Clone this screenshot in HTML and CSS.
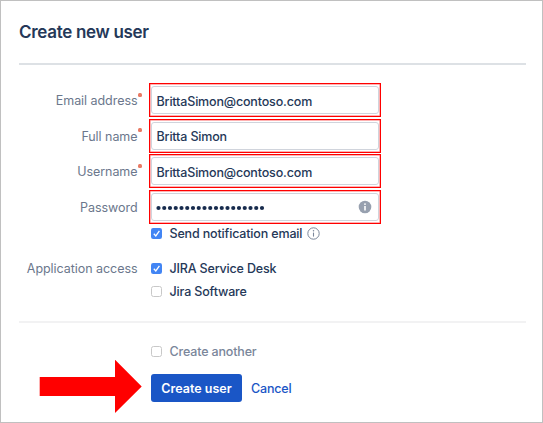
FILE: index.html
```html
<!DOCTYPE html>
<html lang="en">
<head>
<meta charset="utf-8">
<title>Create new user</title>
<link rel="stylesheet" href="styles.css">
</head>
<body>
<main class="dialog">
  <h1 class="title"><span>Create new user</span></h1>
  <form class="form">
    <div class="row"><label class="label required"><span>Email address</span></label><div class="field"><div class="input"><span>BrittaSimon@contoso.com</span></div></div></div>
    <div class="row"><label class="label required"><span>Full name</span></label><div class="field"><div class="input"><span>Britta Simon</span></div></div></div>
    <div class="row"><label class="label required"><span>Username</span></label><div class="field"><div class="input"><span>BrittaSimon@contoso.com</span></div></div></div>
    <div class="row"><label class="label"><span>Password</span></label><div class="field"><div class="input">
      <svg class="dots" width="110" height="6"><path d="M2.5 3H107" /></svg>
      <svg class="info" width="14" height="14" viewBox="0 0 14 14"><circle cx="7" cy="7" r="6.3" fill="#97a0af"/><circle cx="7" cy="4.1" r=".95" fill="#fff"/><path d="M7 6.1v4.3" stroke="#fff" stroke-width="1.6"/></svg>
    </div></div></div>
    <div class="check notify"><svg class="box" viewBox="0 0 11 11"><rect width="11" height="11" rx="2.2" fill="#4285f4"/><path d="M2.8 5.8l2 2.1 3.6-5" fill="none" stroke="#fff" stroke-width="1.3"/></svg><span>Send notification email</span>
      <svg class="hint" width="13" height="13" viewBox="0 0 13 13"><circle cx="6.5" cy="6.5" r="5.7" fill="none" stroke="#7a869a"/><circle cx="6.5" cy="3.8" r=".75" fill="#7a869a"/><path d="M6.5 5.6v4" stroke="#7a869a" stroke-width="1.1"/></svg></div>
    <div class="access">
      <span class="label">Application access</span>
      <div class="check"><svg class="box" viewBox="0 0 11 11"><rect width="11" height="11" rx="2.2" fill="#4285f4"/><path d="M2.8 5.8l2 2.1 3.6-5" fill="none" stroke="#fff" stroke-width="1.3"/></svg><span>JIRA Service Desk</span></div>
    </div>
    <div class="check software"><i class="box empty"></i><span>Jira Software</span></div>
  </form>
  <footer class="footer">
    <div class="check another"><i class="box empty"></i><span>Create another</span></div>
    <div class="actions">
      <svg class="arrow" width="103" height="54" viewBox="0 0 103 54"><path d="M.7 17H76V-.3L102.7 26.4 76 53V36H.7z" fill="#f00"/></svg>
      <button class="submit" type="button"><span>Create user</span></button>
      <a class="cancel">Cancel</a>
    </div>
  </footer>
</main>
</body>
</html>
```
FILE: styles.css
```css
* { box-sizing: border-box; }
body { margin: 0; background: #fff; font: 500 12.5px/16px Inter, "Liberation Sans", sans-serif; letter-spacing: -.16px; color: #253858; }
.dialog { width: 543px; height: 423px; border: 1px solid #c0c0c0; padding: 0 16px 0 18px; overflow: hidden; }
.title { margin: 0; height: 64px; padding-top: 20px; border-bottom: 2px solid #dde1e5; font-size: 17px; line-height: 22px; font-weight: 600; letter-spacing: -.31px; width: 507px; }
.form { height: 258px; padding-top: 18px; border-bottom: 2px solid #f2f2f3; }
.row { display: flex; height: 33px; margin-bottom: 2.5px; }
.label { position: relative; width: 118.5px; margin-right: 11.5px; padding-top: 10px; text-align: right; font-weight: 400; color: #6b778c; letter-spacing: -.05px; white-space: nowrap; }
.required::after { content: ""; position: absolute; width: 4px; height: 4px; border-radius: 1.5px; right: -4.5px; top: 9.5px; background: #e87a64; }
.field { width: 232px; height: 34px; border: 1px solid #f00; box-shadow: inset 0 0 0 .5px #f66; padding: 2px 1px 2px 1px; }
.input { display: flex; align-items: center; height: 28px; width: 228px; border: 1px solid #d0d4dc; border-radius: 3px; padding: 2px 6px 0 4px; }
.input span { padding: 1px 0 0 .5px; }
.dots { fill: none; }
.dots path { stroke: #172b4d; stroke-width: 4.2; stroke-linecap: round; stroke-dasharray: 0 5.75; }
.info { margin: -2px 0 0 auto; }
.check { display: flex; align-items: center; height: 16px; white-space: nowrap; }
.check span { padding-top: 2px; }
.box { width: 11px; height: 11px; margin-right: 7.5px; flex: none; }
.empty { border: 1px solid #c8c8c8; border-radius: 2.5px; background: #fff; }
.notify { margin: 1px 0 0 132px; }
.hint { margin-left: 5px; }
.access { display: flex; margin-top: 19px; }
.access .label { padding: 1px 0 0; margin-right: 13.5px; height: 16px; }
.software { margin: 7px 0 0 132px; }
.footer { padding-top: 20px; }
.another { margin-left: 132px; color: #7a869a; }
.actions { display: flex; height: 54px; margin: 1px 0 0 20px; align-items: center; }
.arrow { margin-right: 9px; }
.submit { width: 91px; height: 28px; margin-top: 2px; padding: 1px 0 0; border: 0; border-radius: 3px; background: #1a56c6; color: #fff; font: 600 12.5px/16px Inter, "Liberation Sans", sans-serif; white-space: nowrap; }
.cancel { margin: 3px 0 0 9px; color: #1a56c6; }
```
